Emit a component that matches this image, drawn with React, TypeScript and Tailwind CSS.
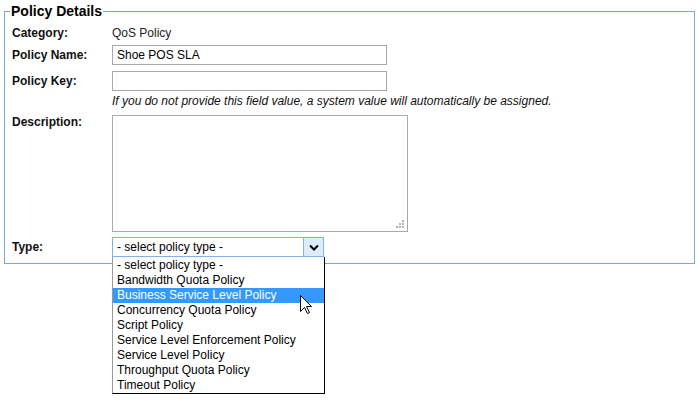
import React from "react";

const policyTypes = [
  "- select policy type -",
  "Bandwidth Quota Policy",
  "Business Service Level Policy",
  "Concurrency Quota Policy",
  "Script Policy",
  "Service Level Enforcement Policy",
  "Service Level Policy",
  "Throughput Quota Policy",
  "Timeout Policy",
];

const Label = ({ children }: { children: React.ReactNode }) => (
  <div className="w-[100px] shrink-0 font-bold text-[#111]">{children}</div>
);

const App = () => {
  return (
    <div className="w-[698px] h-[401px] bg-white text-[12px] text-black font-['Liberation_Sans',Arial,sans-serif] overflow-hidden">
      <fieldset className="ml-[4px] w-[691px] border border-[#7aa6d9] pl-[7px] pb-[6px]">
        <legend className="-ml-[2px] px-[1px] text-[14px] leading-[22px] font-bold text-black">
          Policy Details
        </legend>

        {/* Category */}
        <div className="flex items-center h-[20px] mt-[1px]">
          <Label>Category:</Label>
          <span className="text-[#222]">QoS Policy</span>
        </div>

        {/* Policy Name */}
        <div className="flex items-center h-[20px] mt-[2px]">
          <Label>Policy Name:</Label>
          <div className="w-[275px] h-[20px] border border-[#a9a9a9] px-[4px] flex items-center">
            Shoe POS SLA
          </div>
        </div>

        {/* Policy Key */}
        <div className="flex items-center h-[20px] mt-[6px]">
          <Label>Policy Key:</Label>
          <div className="w-[275px] h-[20px] border border-[#a9a9a9]" />
        </div>
        <div className="flex items-center h-[20px]">
          <div className="w-[100px] shrink-0" />
          <span className="italic text-[#111]">
            If you do not provide this field value, a system value will automatically be assigned.
          </span>
        </div>

        {/* Description */}
        <div className="flex items-start mt-[4px]">
          <div className="w-[100px] shrink-0 font-bold text-[#111] leading-[12px] pt-[1px]">
            Description:
          </div>
          <div className="relative w-[296px] h-[117px] border border-[#a9a9a9]">
            <svg
              className="absolute right-[2px] bottom-[2px]"
              width="11"
              height="11"
              viewBox="0 0 11 11"
            >
              <rect x="8" y="2" width="2" height="2" fill="#b5b5b5" />
              <rect x="5" y="5" width="2" height="2" fill="#b5b5b5" />
              <rect x="8" y="5" width="2" height="2" fill="#b5b5b5" />
              <rect x="2" y="8" width="2" height="2" fill="#b5b5b5" />
              <rect x="5" y="8" width="2" height="2" fill="#b5b5b5" />
              <rect x="8" y="8" width="2" height="2" fill="#b5b5b5" />
            </svg>
          </div>
        </div>

        {/* Type */}
        <div className="flex items-center h-[20px] mt-[5px]">
          <Label>Type:</Label>
          <div className="relative w-[212px] h-[20px]">
            <div className="flex h-full border border-[#7eb4ea]">
              <div className="flex-1 flex items-center pl-[4px]">- select policy type -</div>
              <div className="w-[20px] flex items-center justify-center bg-[#dcecfc] border-l border-[#7eb4ea]">
                <svg width="10" height="7" viewBox="0 0 10 7">
                  <path d="M1 1.5 L5 5.5 L9 1.5" fill="none" stroke="#000" strokeWidth="2" />
                </svg>
              </div>
            </div>

            {/* Open list */}
            <div className="absolute left-0 top-[20px] z-10 w-[213px] bg-white border-l border-l-[#9a9a9a] border-r border-b border-r-black border-b-black pt-[1px]">
              {policyTypes.map((t, i) => (
                <div
                  key={t}
                  className={
                    i === 2
                      ? "h-[15px] leading-[15px] pl-[4px] bg-[#3399ff] text-white"
                      : "h-[15px] leading-[15px] pl-[4px] text-black"
                  }
                >
                  {t}
                </div>
              ))}
            </div>

            {/* Cursor */}
            <svg
              className="absolute left-[188px] top-[58px] z-20"
              width="13"
              height="20"
              viewBox="0 0 13 20"
            >
              <path
                d="M0.5 0.5 L0.5 16.5 L4.5 12.5 L7.5 18.5 L9.5 17.5 L6.5 11.5 L11.5 11.5 Z"
                fill="#fff"
                stroke="#000"
                strokeWidth="1"
              />
            </svg>
          </div>
        </div>
      </fieldset>
    </div>
  );
};

export default App;
